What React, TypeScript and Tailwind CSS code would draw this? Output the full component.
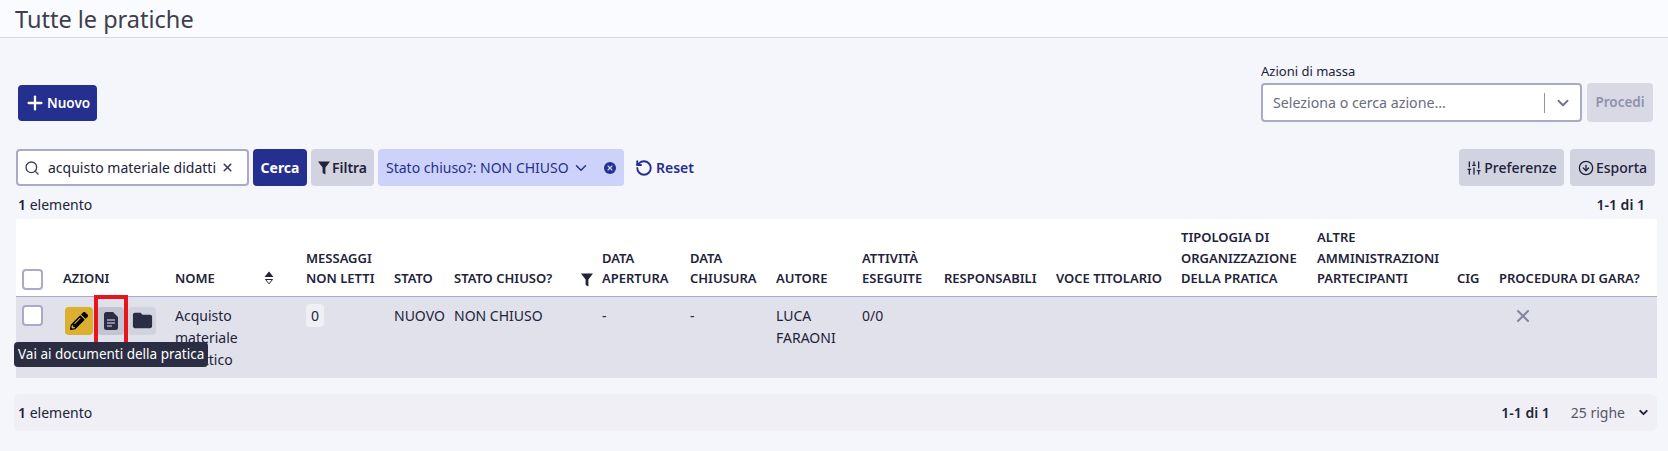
import { ChevronDown, CircleArrowDown, Plus, RotateCcw, Search, SlidersVertical, X } from 'lucide-react';
import { FaPencilAlt } from 'react-icons/fa';
import { MdFolder } from 'react-icons/md';

const columns = [
  { label: '', width: 'w-[47px]' },
  { label: 'AZIONI', width: 'w-[112px]' },
  { label: 'NOME', width: 'w-[131px]' },
  { label: 'MESSAGGI NON LETTI', width: 'w-[88px]' },
  { label: 'STATO', width: 'w-[60px]' },
  { label: 'STATO CHIUSO?', width: 'w-[148px]' },
  { label: 'DATA APERTURA', width: 'w-[88px]' },
  { label: 'DATA CHIUSURA', width: 'w-[86px]' },
  { label: 'AUTORE', width: 'w-[86px]' },
  { label: 'ATTIVITÀ ESEGUITE', width: 'w-[82px]' },
  { label: 'RESPONSABILI', width: 'w-[112px]' },
  { label: 'VOCE TITOLARIO', width: 'w-[125px]' },
  { label: 'TIPOLOGIA DI ORGANIZZAZIONE DELLA PRATICA', width: 'w-[136px]' },
  { label: 'ALTRE AMMINISTRAZIONI PARTECIPANTI', width: 'w-[140px]' },
  { label: 'CIG', width: 'w-[42px]' },
  { label: 'PROCEDURA DI GARA?', width: 'w-[158px]' },
];

function Checkbox() {
  return <span className="block h-[21px] w-[21px] rounded-[4px] border-2 border-[#a9a9c8] bg-white" />;
}

function SortIcon() {
  return (
    <svg width="10" height="14" viewBox="0 0 10 14" className="text-[#22223a]">
      <path d="M5 0.5 9.5 6H0.5Z" fill="currentColor" />
      <path d="M1.5 8.5h7L5 12.8Z" fill="none" stroke="currentColor" />
    </svg>
  );
}

function FunnelIcon({ className }: { className?: string }) {
  return (
    <svg width="12" height="14" viewBox="0 0 12 14" className={className}>
      <path d="M0 0.5h12L7.4 6.5V13.5L4.6 12V6.5Z" fill="currentColor" />
    </svg>
  );
}

function DocIcon() {
  return (
    <svg width="14" height="18" viewBox="0 0 14 18">
      <path d="M2.5 0H9l5 5v10.5a2.5 2.5 0 0 1-2.5 2.5h-9A2.5 2.5 0 0 1 0 15.5v-13A2.5 2.5 0 0 1 2.5 0Z" fill="#2b2d42" />
      <path d="M3 8h8M3 11h8M3 14h5" stroke="#a9aabb" strokeWidth="1.3" />
    </svg>
  );
}

export default function App() {
  return (
    <div className="h-[451px] overflow-hidden bg-[#f5f6fb] font-['Noto_Sans',sans-serif] text-[14px] text-[#22223a]">
      <div className="flex h-[38px] items-center border-b border-[#d5d8e6] bg-[#fafbfe] pl-[15px]">
        <h1 className="text-[23.5px] leading-[28px] text-[#3e3f4b]">Tutte le pratiche</h1>
      </div>

      <div className="flex h-[84px] items-end justify-between pl-[18px] pr-[15px]">
        <button className="mb-[1px] flex h-[36px] w-[79px] items-center gap-[1px] rounded-[4px] bg-[#252f8f] pl-[6px] text-[13.5px] font-semibold text-white">
          <Plus size={22} strokeWidth={2.5} />
          Nuovo
        </button>
        <div className="flex items-end gap-[5px]">
          <div>
            <div className="mb-[2px] text-[13px] leading-[20px]">Azioni di massa</div>
            <div className="flex h-[39px] w-[321px] items-center rounded-[4px] border-2 border-[#a9a9c8] bg-white pl-[10px]">
              <span className="flex-1 text-[14.2px] text-[#6b6c80]">Seleziona o cerca azione...</span>
              <span className="h-[20px] w-[1px] bg-[#8f90ad]" />
              <ChevronDown size={18} strokeWidth={2.5} className="ml-[9px] mr-[8px] text-[#73748c]" />
            </div>
          </div>
          <button className="h-[39px] w-[66px] rounded-[4px] bg-[#d9d9e5] text-[13.5px] font-semibold text-[#8f90ad]">Procedi</button>
        </div>
      </div>

      <div className="mt-[27px] flex h-[37px] items-stretch pl-[16px] pr-[13px]">
        <div className="flex w-[233px] items-center rounded-[4px] border-2 border-[#a9a9c8] bg-white pl-[6px] pr-[13px]">
          <Search size={16} className="shrink-0 text-[#3e3f4b]" />
          <span className="ml-[8px] flex-1 overflow-hidden whitespace-nowrap">acquisto materiale didatti</span>
          <X size={13} strokeWidth={3} className="ml-[4px] shrink-0 text-[#3e3f4b]" />
        </div>
        <button className="ml-[4px] w-[54px] rounded-[4px] bg-[#252f8f] font-bold text-white">Cerca</button>
        <button className="ml-[4px] flex w-[63px] items-center justify-center gap-[2px] rounded-[4px] bg-[#d1d3e0] font-semibold">
          <FunnelIcon />
          Filtra
        </button>
        <div className="ml-[4px] flex w-[246px] items-center rounded-[4px] bg-[#cdd2fa] pl-[8px] text-[#252f8f]">
          <span className="whitespace-nowrap">Stato chiuso?: NON CHIUSO</span>
          <ChevronDown size={18} className="ml-[3px]" />
          <span className="ml-[14px] flex h-[12px] w-[12px] items-center justify-center rounded-full bg-[#252f8f]">
            <X size={8} strokeWidth={3.5} className="text-[#cdd2fa]" />
          </span>
        </div>
        <button className="ml-[11px] flex items-center gap-[3px] font-semibold text-[#252f8f]">
          <RotateCcw size={18} strokeWidth={2.5} />
          Reset
        </button>
        <div className="ml-auto flex gap-[6px]">
          <button className="flex w-[105px] items-center justify-center gap-[2px] rounded-[4px] bg-[#d1d3e0] font-medium">
            <SlidersVertical size={16} />
            Preferenze
          </button>
          <button className="flex w-[85px] items-center justify-center gap-[2px] rounded-[4px] bg-[#d1d3e0] font-medium">
            <CircleArrowDown size={16} />
            Esporta
          </button>
        </div>
      </div>

      <div className="flex h-[33px] items-center justify-between pl-[18px] pr-[23px] pt-[4px]">
        <span>
          <b className="font-semibold">1</b> elemento
        </span>
        <span className="font-semibold">1-1 di 1</span>
      </div>

      <div className="ml-[16px] mr-[11px]">
        <table className="w-full table-fixed border-collapse">
          <colgroup>
            {columns.map((c, i) => (
              <col key={i} className={c.width} />
            ))}
          </colgroup>
          <thead>
            <tr className="h-[77px] border-b border-[#a9a9c8] bg-white text-left align-bottom text-[13px] leading-[20.5px]">
              {columns.map((c, i) => (
                <th key={i} className="pb-[7px] pr-[2px] font-semibold">
                  {i === 0 && (
                    <span className="mb-[-1px] ml-[6px] block">
                      <Checkbox />
                    </span>
                  )}
                  {i === 2 && (
                    <span className="flex items-center justify-between pr-[30px]">
                      {c.label}
                      <SortIcon />
                    </span>
                  )}
                  {i === 5 && (
                    <span className="flex items-center justify-between whitespace-nowrap pr-[7px]">
                      {c.label}
                      <FunnelIcon className="mb-[-4px]" />
                    </span>
                  )}
                  {i !== 0 && i !== 2 && i !== 5 && c.label}
                </th>
              ))}
            </tr>
          </thead>
          <tbody>
            <tr className="h-[82px] bg-[#e0e1ea] align-top leading-[22px]">
              <td className="pl-[6px] pt-[8px]">
                <Checkbox />
              </td>
              <td className="pt-[10px]">
                <div className="relative ml-[2px] flex gap-[4px]">
                  <span className="flex h-[28px] w-[28px] items-center justify-center rounded-[4px] bg-[#dcb02f]">
                    <FaPencilAlt size={18} className="text-black" />
                  </span>
                  <span className="flex h-[28px] w-[27px] items-center justify-center rounded-[4px] bg-[#c4c5d3]">
                    <DocIcon />
                  </span>
                  <span className="flex h-[28px] w-[28px] items-center justify-center rounded-[4px] bg-[#d1d3e0]">
                    <MdFolder size={23} className="text-[#2b2d42]" />
                  </span>
                  <span className="absolute left-[29px] top-[-12px] h-[49px] w-[34px] border-4 border-b-0 border-[#e8141c]" />
                  <span className="absolute left-[-51px] top-[35px] z-10 whitespace-nowrap rounded-[4px] bg-[#2b2d42] px-[4px] text-[13.5px] leading-[25px] text-white">
                    Vai ai documenti della pratica
                  </span>
                </div>
              </td>
              <td className="pr-[50px] pt-[8px]">Acquisto materiale didattico</td>
              <td className="pt-[7px]">
                <span className="inline-block rounded-[4px] bg-[#efeff5] px-[5px] leading-[23px]">0</span>
              </td>
              <td className="pt-[8px]">NUOVO</td>
              <td className="pt-[8px]">NON CHIUSO</td>
              <td className="pt-[8px]">-</td>
              <td className="pt-[8px]">-</td>
              <td className="pr-[10px] pt-[8px]">LUCA FARAONI</td>
              <td className="pt-[8px]">0/0</td>
              <td />
              <td />
              <td />
              <td />
              <td />
              <td className="pl-[14px] pt-[9px]">
                <X size={20} strokeWidth={2.5} className="text-[#8485a3]" />
              </td>
            </tr>
          </tbody>
        </table>
      </div>

      <div className="ml-[14px] mr-[11px] mt-[16px] flex h-[37px] items-center rounded-[6px] bg-[#efeff5] pl-[4px] pr-[7px]">
        <span>
          <b className="font-semibold">1</b> elemento
        </span>
        <span className="ml-auto font-semibold">1-1 di 1</span>
        <span className="ml-[21px] text-[#55566b]">25 righe</span>
        <ChevronDown size={13} strokeWidth={3.5} className="ml-[12px]" />
      </div>
    </div>
  );
}
